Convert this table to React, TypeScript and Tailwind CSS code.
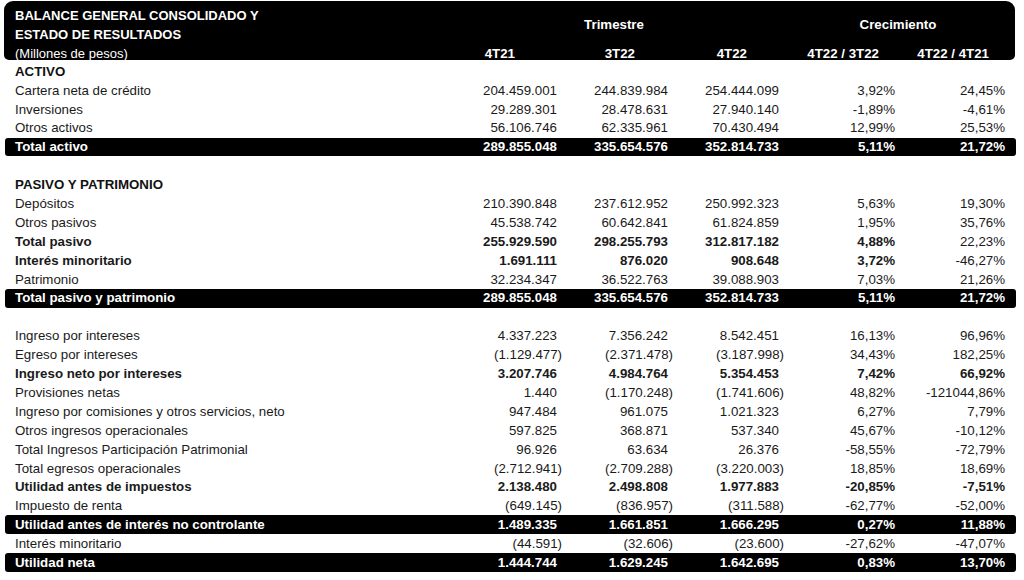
import React from "react";

type Row =
  | { kind: "blank" }
  | { kind: "section"; label: string }
  | { kind: "row"; label: string; v: string[]; bold?: boolean; boldPct?: boolean[]; bar?: boolean };

const rows: Row[] = [
  { kind: "section", label: "ACTIVO" },
  { kind: "row", label: "Cartera neta de crédito", v: ["204.459.001", "244.839.984", "254.444.099", "3,92%", "24,45%"] },
  { kind: "row", label: "Inversiones", v: ["29.289.301", "28.478.631", "27.940.140", "-1,89%", "-4,61%"] },
  { kind: "row", label: "Otros activos", v: ["56.106.746", "62.335.961", "70.430.494", "12,99%", "25,53%"] },
  { kind: "row", label: "Total activo", v: ["289.855.048", "335.654.576", "352.814.733", "5,11%", "21,72%"], bar: true },
  { kind: "blank" },
  { kind: "section", label: "PASIVO Y PATRIMONIO" },
  { kind: "row", label: "Depósitos", v: ["210.390.848", "237.612.952", "250.992.323", "5,63%", "19,30%"] },
  { kind: "row", label: "Otros pasivos", v: ["45.538.742", "60.642.841", "61.824.859", "1,95%", "35,76%"] },
  { kind: "row", label: "Total pasivo", v: ["255.929.590", "298.255.793", "312.817.182", "4,88%", "22,23%"], bold: true, boldPct: [true, false] },
  { kind: "row", label: "Interés minoritario", v: ["1.691.111", "876.020", "908.648", "3,72%", "-46,27%"], bold: true, boldPct: [true, false] },
  { kind: "row", label: "Patrimonio", v: ["32.234.347", "36.522.763", "39.088.903", "7,03%", "21,26%"] },
  { kind: "row", label: "Total pasivo y patrimonio", v: ["289.855.048", "335.654.576", "352.814.733", "5,11%", "21,72%"], bar: true },
  { kind: "blank" },
  { kind: "row", label: "Ingreso por intereses", v: ["4.337.223", "7.356.242", "8.542.451", "16,13%", "96,96%"] },
  { kind: "row", label: "Egreso por intereses", v: ["(1.129.477)", "(2.371.478)", "(3.187.998)", "34,43%", "182,25%"] },
  { kind: "row", label: "Ingreso neto por intereses", v: ["3.207.746", "4.984.764", "5.354.453", "7,42%", "66,92%"], bold: true, boldPct: [true, true] },
  { kind: "row", label: "Provisiones netas", v: ["1.440", "(1.170.248)", "(1.741.606)", "48,82%", "-121044,86%"] },
  { kind: "row", label: "Ingreso por comisiones y otros servicios, neto", v: ["947.484", "961.075", "1.021.323", "6,27%", "7,79%"] },
  { kind: "row", label: "Otros ingresos operacionales", v: ["597.825", "368.871", "537.340", "45,67%", "-10,12%"] },
  { kind: "row", label: "Total Ingresos Participación Patrimonial", v: ["96.926", "63.634", "26.376", "-58,55%", "-72,79%"] },
  { kind: "row", label: "Total egresos operacionales", v: ["(2.712.941)", "(2.709.288)", "(3.220.003)", "18,85%", "18,69%"] },
  { kind: "row", label: "Utilidad antes de impuestos", v: ["2.138.480", "2.498.808", "1.977.883", "-20,85%", "-7,51%"], bold: true, boldPct: [true, true] },
  { kind: "row", label: "Impuesto de renta", v: ["(649.145)", "(836.957)", "(311.588)", "-62,77%", "-52,00%"] },
  { kind: "row", label: "Utilidad antes de interés no controlante", v: ["1.489.335", "1.661.851", "1.666.295", "0,27%", "11,88%"], bar: true },
  { kind: "row", label: "Interés minoritario", v: ["(44.591)", "(32.606)", "(23.600)", "-27,62%", "-47,07%"] },
  { kind: "row", label: "Utilidad neta", v: ["1.444.744", "1.629.245", "1.642.695", "0,83%", "13,70%"], bar: true },
];

const GRID = "grid grid-cols-[442px_105px_111px_111px_111px_110px]";

function DataRow({ r }: { r: Row }) {
  if (r.kind === "blank") return <div className="h-[18.9px]" />;
  if (r.kind === "section")
    return (
      <div className={`${GRID} h-[18.9px] items-center pl-[10px] pr-[11px] font-bold text-[#111]`}>
        <div>{r.label}</div>
      </div>
    );
  const bar = !!r.bar;
  const base = bar
    ? "bg-black text-white font-bold rounded-[3px]"
    : "text-[#1a1a1a]";
  return (
    <div className={`${GRID} h-[18.9px] items-center pl-[10px] pr-[11px] ${base}`}>
      <div className={r.bold ? "font-bold" : ""}>{r.label}</div>
      {r.v.slice(0, 3).map((x, i) => (
        <div
          key={i}
          className={`text-right whitespace-nowrap ${x.endsWith(")") ? "" : "pr-[5px]"} ${r.bold ? "font-bold" : ""}`}
        >
          {x}
        </div>
      ))}
      {r.v.slice(3).map((x, i) => (
        <div
          key={i + 3}
          className={`text-right whitespace-nowrap ${r.boldPct && r.boldPct[i] ? "font-bold" : ""}`}
        >
          {x}
        </div>
      ))}
    </div>
  );
}

export default function App() {
  return (
    <div
      className="w-[1024px] h-[580px] bg-white overflow-hidden text-[13.3px] leading-none"
      style={{ fontFamily: '"Liberation Sans", Arial, sans-serif' }}
    >
      <div className="pt-[1px] pl-[4px] pr-[9px]">
        <div className="bg-black text-white rounded-t-[9px] rounded-b-[5px] h-[59px] flex flex-col pl-[11px] pr-[11px]">
          <div className={`${GRID} h-[42px] items-center pt-[6px]`}>
            <div className="font-bold leading-[18.5px] text-[13px]">
              <div>BALANCE GENERAL CONSOLIDADO Y</div>
              <div>ESTADO DE RESULTADOS</div>
            </div>
            <div className="col-span-3 text-center font-bold pr-[13px] pb-[2px]">Trimestre</div>
            <div className="col-span-2 text-center font-bold pl-[7px] pb-[2px]">Crecimiento</div>
          </div>
          <div className={`${GRID} h-[17px] items-center pt-[4px]`}>
            <div className="text-[13px]">(Millones de pesos)</div>
            <div className="text-right font-bold pr-[47px]">4T21</div>
            <div className="text-right font-bold pr-[38px]">3T22</div>
            <div className="text-right font-bold pr-[37px]">4T22</div>
            <div className="text-right font-bold pr-[16px]">4T22 / 3T22</div>
            <div className="text-right font-bold pr-[16px]">4T22 / 4T21</div>
          </div>
        </div>
      </div>
      <div className="pl-[5px] pr-[8px] pt-[2px]">
        {rows.map((r, i) => (
          <DataRow key={i} r={r} />
        ))}
      </div>
    </div>
  );
}
